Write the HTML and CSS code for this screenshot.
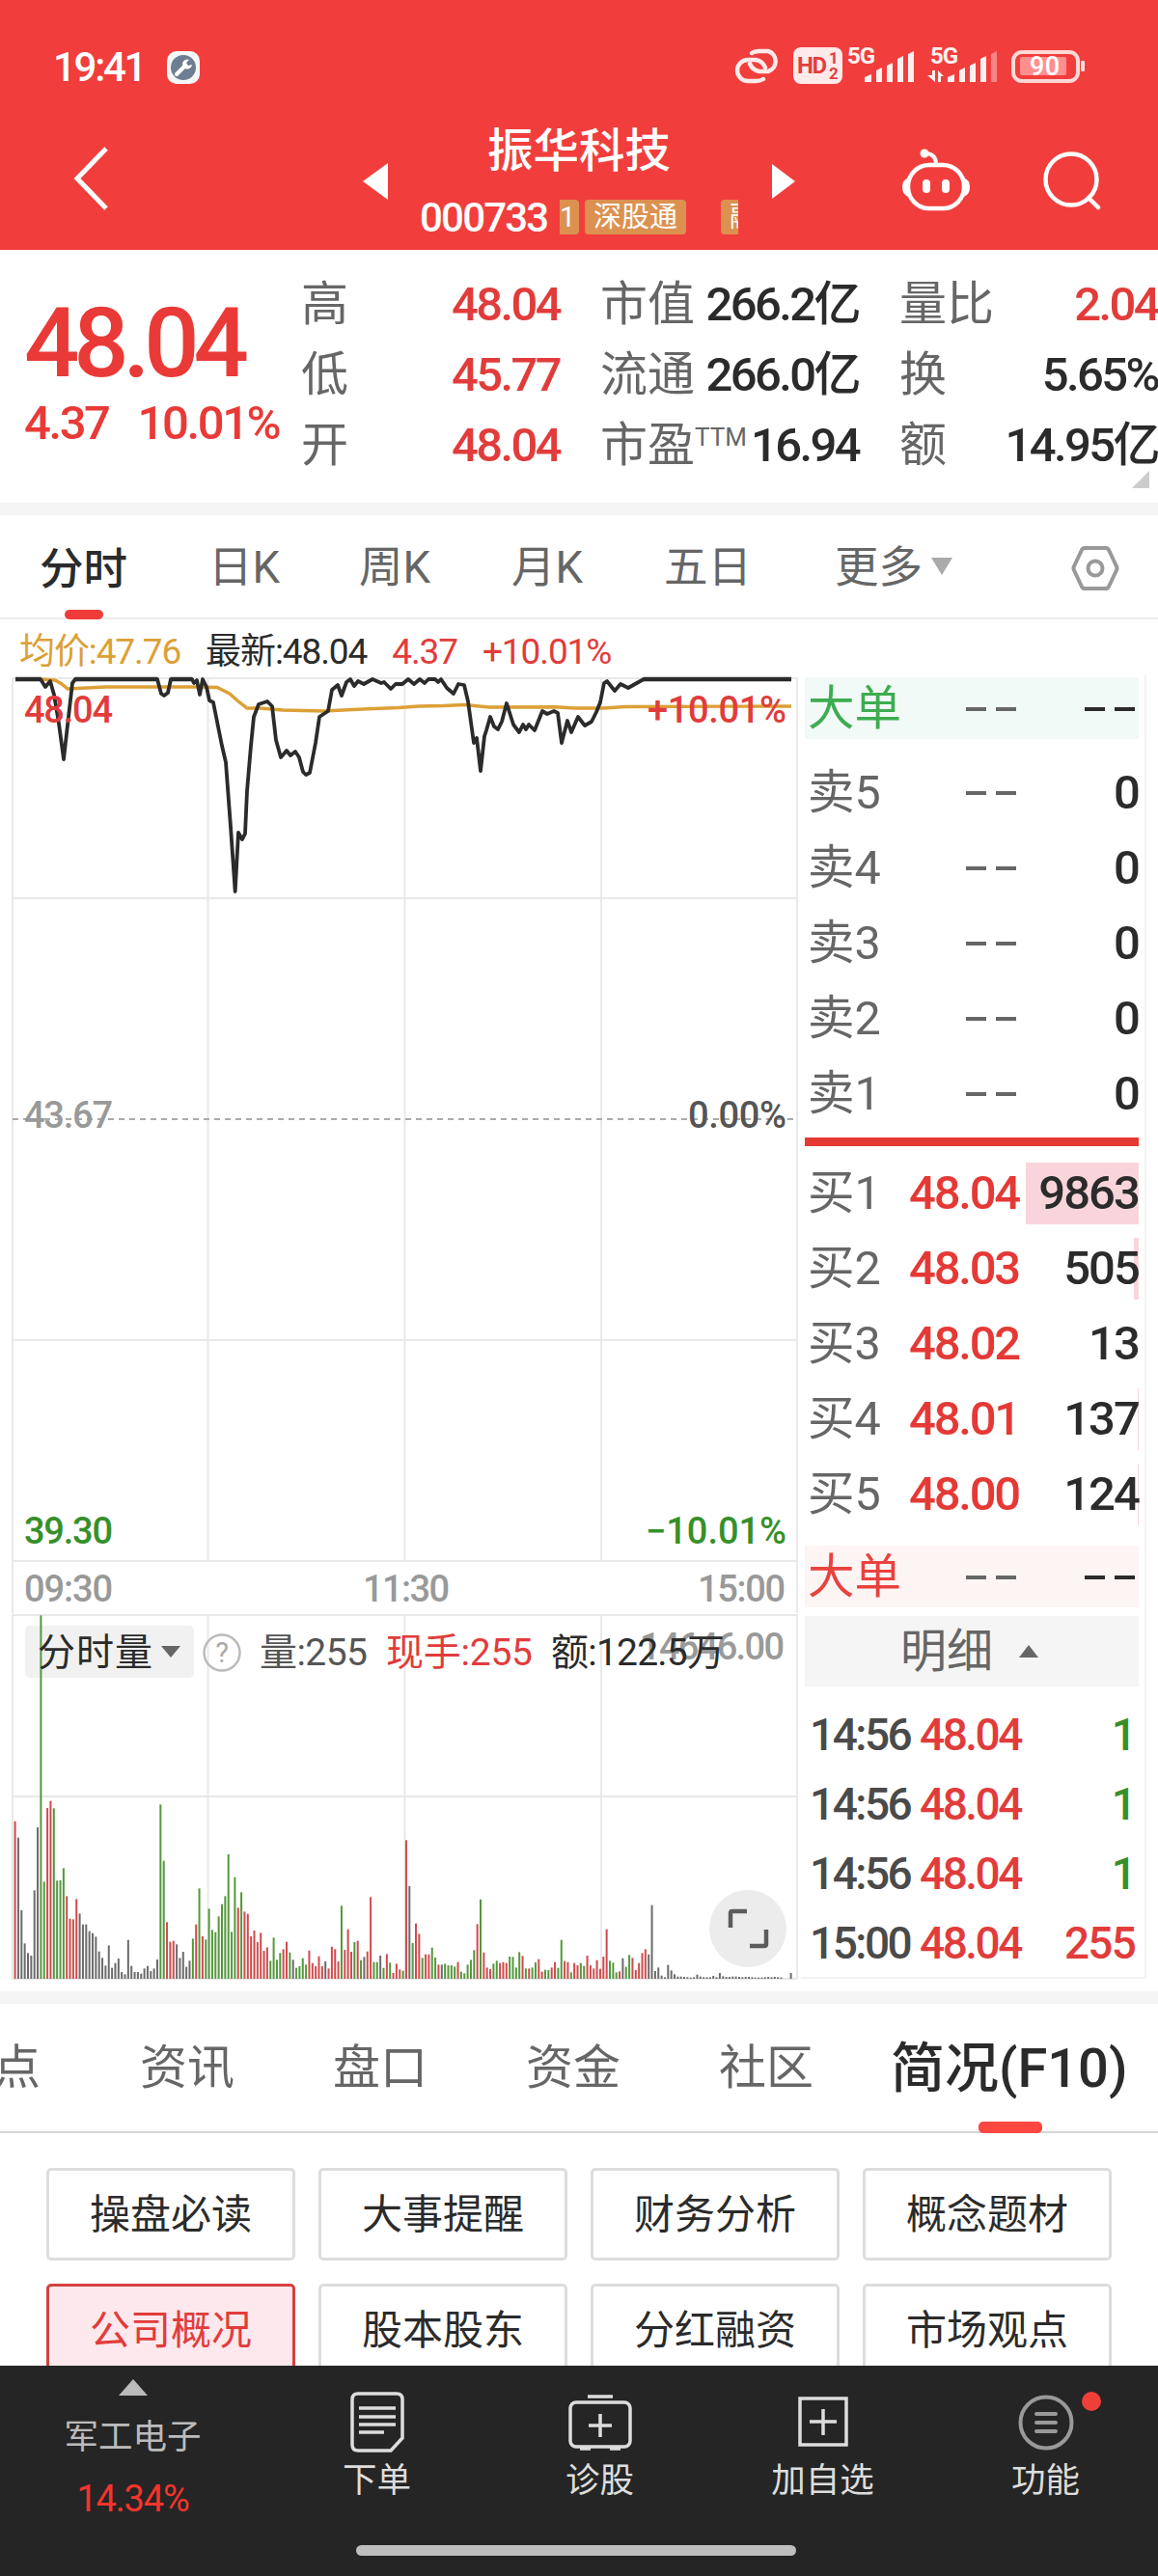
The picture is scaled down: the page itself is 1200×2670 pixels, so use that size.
FILE: index.html
```
<!doctype html>
<html lang="zh-CN">
<head>
    <meta charset="UTF-8">
    <meta name="viewport" content="width=device-width, initial-scale=1.0">
    <title>振华科技 000733</title>
    <link rel="stylesheet" href="styles.css">
</head>
<body>
<div class="screen">
    <div class="header">
        <div class="status-bar">
            <span class="clock">19:41</span>
            <svg class="app-icon" width="36" height="36" viewBox="0 0 36 36">
                <rect x="1" y="1" width="34" height="34" rx="10" fill="#f4f6f8"/>
                <circle cx="18" cy="18" r="13" fill="#6d7d92"/>
                <path d="M11 25l8-8" stroke="#fff" stroke-width="4" stroke-linecap="round"/>
                <path d="M24 10a5 5 0 1 0 3 5l-4 1-2-3z" fill="#fff"/>
            </svg>
            <svg class="status-icons" width="400" height="50" viewBox="740 45 400 50">
                <g fill="none" stroke="#ffeaea" stroke-width="4.5" stroke-linecap="round">
                    <path d="M779 55q3-2 8-2h9a11 11 0 0 1 0 21h-9q-7-1-10-8"/>
                    <path d="M791 82q-3 2-8 2h-8a11 11 0 0 1 0-22h8q7 1 10 8"/>
                </g>
                <rect x="822" y="49" width="51" height="38" rx="8" fill="#ffeaea"/>
                <text x="826" y="76" class="hd" textLength="31">HD</text>
                <text x="859" y="66" class="hd-small">1</text>
                <text x="859" y="82" class="hd-small">2</text>
                <g fill="#fff0f0">
                    <text x="878" y="66" class="net" textLength="29">5G</text>
                    <path d="M896 85v-5l7-3v8zM908 85v-12l6-3v15zM919 85v-17l6-3v20zM930 85v-24l6-3v27zM941 85v-29l6-3v32z"/>
                    <text x="964" y="66" class="net" textLength="29">5G</text>
                    <path d="M966 73h3v12l-8-7h5zM972 85v-12l6 6h-3v6z"/>
                    <path d="M982 85v-5l7-3v8zM994 85v-12l6-3v15zM1005 85v-17l6-3v20zM1016 85v-24l6-3v27z"/>
                    <path d="M1027 85v-29l6-3v32z" opacity=".4"/>
                </g>
                <rect x="1050" y="54" width="67" height="30" rx="9" fill="none" stroke="#ffd9d6" stroke-width="4"/>
                <rect x="1057" y="59" width="48" height="19" rx="2" fill="#ff8f8f"/>
                <rect x="1120" y="63" width="4" height="11" rx="1" fill="#ffe0e0"/>
                <text x="1067" y="78" class="battery" textLength="31">90</text>
            </svg>
        </div>
        <div class="title-bar">
            <svg class="back" width="40" height="68" viewBox="0 0 40 68">
                <path d="M35 3L5 34L35 65" fill="none" stroke="#fff" stroke-width="5"/>
            </svg>
            <svg class="prev" width="26" height="38" viewBox="0 0 26 38"><path d="M26 0v38L0 19z" fill="#fff"/></svg>
            <div class="stock">
                <div class="stock-name">振华科技</div>
                <div class="stock-code">
                    <span class="code">000733</span>
                    <div class="tags">
                        <span class="tag tag-first">1</span>
                        <span class="tag">深股通</span>
                        <span class="tag tag-last">融</span>
                    </div>
                </div>
            </div>
            <svg class="next" width="24" height="36" viewBox="0 0 24 36"><path d="M0 0v36L24 18z" fill="#fff"/></svg>
            <svg class="robot" width="72" height="66" viewBox="934 153 72 66">
                <rect x="941" y="171" width="58" height="45" rx="22" fill="none" stroke="#fff" stroke-width="4.5"/>
                <path d="M942 184q-7 2-7 10t7 10zM998 184q7 2 7 10t-7 10z" fill="#fff"/>
                <path d="M960 159q10 1 10 11" fill="none" stroke="#fff" stroke-width="4"/>
                <circle cx="958" cy="159" r="4.5" fill="#fff"/>
                <rect x="956" y="186" width="8" height="14" rx="4" fill="#fff"/>
                <rect x="976" y="186" width="8" height="14" rx="4" fill="#fff"/>
            </svg>
            <svg class="search" width="64" height="62" viewBox="1079 156 64 62">
                <circle cx="1110" cy="186" r="26.5" fill="none" stroke="#fff" stroke-width="4.5"/>
                <path d="M1128 205l10 10" stroke="#fff" stroke-width="4.5" stroke-linecap="round"/>
            </svg>
        </div>
    </div>

    <div class="quote">
        <div class="price">
            <div class="price-now">48.04</div>
            <div class="price-change"><span>4.37</span><span>10.01%</span></div>
        </div>
        <div class="stats">
            <div class="stat"><span>高</span><b class="red">48.04</b></div>
            <div class="stat"><span>市值</span><b>266.2亿</b></div>
            <div class="stat"><span>量比</span><b class="red">2.04</b></div>
            <div class="stat"><span>低</span><b class="red">45.77</b></div>
            <div class="stat"><span>流通</span><b>266.0亿</b></div>
            <div class="stat"><span>换</span><b>5.65%</b></div>
            <div class="stat"><span>开</span><b class="red">48.04</b></div>
            <div class="stat"><span>市盈<sup>TTM</sup></span><b>16.94</b></div>
            <div class="stat"><span>额</span><b>14.95亿</b></div>
        </div>
        <i class="expand"></i>
    </div>

    <div class="periods">
        <span class="period active">分时</span>
        <span class="period">日K</span>
        <span class="period">周K</span>
        <span class="period">月K</span>
        <span class="period">五日</span>
        <span class="period">更多<i class="caret"></i></span>
        <svg class="setting" width="50" height="48" viewBox="0 0 50 48">
            <path d="M14 3h22q2 0 3 2l8 17q1 2 0 4l-8 17q-1 2-3 2H14q-2 0-3-2L3 26q-1-2 0-4l8-17q1-2 3-2z" fill="none" stroke="#999" stroke-width="4"/>
            <circle cx="25" cy="24" r="7.5" fill="none" stroke="#999" stroke-width="4"/>
        </svg>
    </div>

    <div class="averages">
        <span class="gold">均价:47.76</span>
        <span>最新:48.04</span>
        <span class="red">4.37</span>
        <span class="red">+10.01%</span>
    </div>

    <div class="market">
        <div class="charts">
            <svg class="price-chart" width="830" height="972" viewBox="0 0 830 972">
                <g class="grid">
                    <path d="M13 3H826V918H13zM13 231H826M13 689H826M215.5 3V918M419.5 3V918M623 3V918M13 918V972M826 918V972"/>
                    <path class="dashed" d="M13 460H826"/>
                </g>
                <polyline class="avg-line" points="42,4 57,5 64,9 70,14 110,12 209,12 225,12.5 238,19 247,27 256,34 269,34 293,36 335,37 376,35 413,33.5 434,32 460,31.5 481,30.5 507,33 575,32.7 596,34 625,34 648,32.5 820,32"/>
                <polyline class="price-line" points="16,4 42,4 47,12 52,6 56,20 61,50 66,87 71,43 75,8 78,4 163,4 167,19 170,21 174,18 177,4 199,4 201,8 204,5 207,20 210,4 214,12 217,26 221,28 230,73 234,90 239,157 243.7,224 247,163 251,170 254,164 256,120 260,73 263,43 268,30 277,27 282,32 286,67 291,85 297,78 301,83 306,79 310,85 314,100 317,103 321,101 327,70 331,43 340,37 344,15 350,10 354,21 359,7 363,4 367,11 371,6 377,9 386,4 395,8 398,7 405,14 410,9 417,9 423,4 429,9 435,4 440,8 444,4 451,4 454,7 457,4 463,13 470,19 475,9 481,10 485,27 491,70 494,65 498,99 502,63 504,57 508,43 512,53 516,56 520,48 525,29 532,51 538,59 542,51 545,56 548,51 554,57 558,47 562,37 567,40 574,37 578,39 582,70 588,47 592,59 599,43 606,52 613,48 618,38 622,28 626,8 629,6 637,16 643,9 651,13 667,4 820,4"/>
                <path class="limit-line" d="M16 4H42M78 4H163M177 4H199M667 4H820"/>
                <g class="labels">
                    <text class="red" x="25" y="49" textLength="92">48.04</text>
                    <text class="red" x="671" y="49" textLength="144">+10.01%</text>
                    <text class="gray" x="25" y="469" textLength="92">43.67</text>
                    <text class="dark" x="713" y="469" textLength="102">0.00%</text>
                    <text class="green" x="25" y="900" textLength="92">39.30</text>
                    <text class="green" x="669" y="900" textLength="146">−10.01%</text>
                    <text class="gray" x="25" y="960" textLength="92">09:30</text>
                    <text class="gray" x="376" y="960" textLength="90">11:30</text>
                    <text class="gray" x="723" y="960" textLength="91">15:00</text>
                </g>
            </svg>
            <div class="volume">
                <svg class="volume-chart" width="830" height="380" viewBox="0 0 830 380">
                    <path class="grid" d="M13 2H826V379H13zM13 190H826M215.5 2V379M419.5 2V379M623 2V379"/>
                    <rect x="26" y="13" width="175" height="54" rx="5" fill="#f1f1f1"/>
                    <g class="bars"></g>
                    <path d="M167 34h20l-10 12z" fill="#666"/>
                    <circle cx="230" cy="41" r="18.5" fill="none" stroke="#bbb" stroke-width="2.5"/>
                    <text class="help" x="230" y="51">?</text>
                    <g class="labels">
                        <text class="gray" x="663" y="48" textLength="150">14646.00</text>
                        <text class="black cjk" x="39" y="54" textLength="119">分时量</text>
                        <text class="dark cjk" x="269" y="54" textLength="112">量:255</text>
                        <text class="red cjk" x="400" y="54" textLength="152">现手:255</text>
                        <text class="black cjk" x="571" y="54" textLength="180">额:122.5万</text>
                    </g>
                </svg>
                <div class="fullscreen">
                    <svg width="44" height="44" viewBox="0 0 44 44">
                        <path d="M4 21V6q0-2 2-2h15M41 23V38q0 2-2 2H24" fill="none" stroke="#5c5c5c" stroke-width="4.5"/>
                    </svg>
                </div>
            </div>
        </div>

        <div class="book">
            <div class="big sell"><span>大单</span><i class="dash"></i><i class="dash black"></i></div>
            <div class="orders">
                <div class="order"><span>卖5</span><i class="dash"></i><b>0</b></div>
                <div class="order"><span>卖4</span><i class="dash"></i><b>0</b></div>
                <div class="order"><span>卖3</span><i class="dash"></i><b>0</b></div>
                <div class="order"><span>卖2</span><i class="dash"></i><b>0</b></div>
                <div class="order"><span>卖1</span><i class="dash"></i><b>0</b></div>
            </div>
            <div class="divider"></div>
            <div class="orders buy">
                <div class="order"><span>买1</span><em>48.04</em><b style="background-size: 117px 64px">9863</b></div>
                <div class="order"><span>买2</span><em>48.03</em><b style="background-size: 5px 64px">505</b></div>
                <div class="order"><span>买3</span><em>48.02</em><b>13</b></div>
                <div class="order"><span>买4</span><em>48.01</em><b style="background-size: 1px 64px">137</b></div>
                <div class="order"><span>买5</span><em>48.00</em><b style="background-size: 1px 64px">124</b></div>
            </div>
            <div class="big bought"><span>大单</span><i class="dash"></i><i class="dash black"></i></div>
            <div class="detail-head">明细<i class="caret-up"></i></div>
            <div class="ticks">
                <div class="tick"><span>14:56</span><em>48.04</em><b class="green">1</b></div>
                <div class="tick"><span>14:56</span><em>48.04</em><b class="green">1</b></div>
                <div class="tick"><span>14:56</span><em>48.04</em><b class="green">1</b></div>
                <div class="tick"><span>15:00</span><em>48.04</em><b class="red">255</b></div>
            </div>
        </div>
    </div>

    <div class="sections">
        <span>点</span>
        <span>资讯</span>
        <span>盘口</span>
        <span>资金</span>
        <span>社区</span>
        <span class="active">简况(F10)</span>
    </div>

    <div class="topics">
        <div class="topic">操盘必读</div>
        <div class="topic">大事提醒</div>
        <div class="topic">财务分析</div>
        <div class="topic">概念题材</div>
        <div class="topic active">公司概况</div>
        <div class="topic">股本股东</div>
        <div class="topic">分红融资</div>
        <div class="topic">市场观点</div>
    </div>

    <div class="bottom">
        <div class="nav">
            <div class="sector">
                <i class="sector-arrow"></i>
                <span>军工电子</span>
                <span class="sector-change">14.34%</span>
            </div>
            <div class="nav-item">
                <svg width="66" height="66" viewBox="0 0 66 66" fill="none" stroke="#ddd" stroke-width="3.5">
                    <path d="M13 3h40q6 0 6 6v40L47 62H13q-6 0-6-6V9q0-6 6-6z"/>
                    <path d="M14 18h38M14 27h38M14 35h38M14 43h26"/>
                </svg>
                <span>下单</span>
            </div>
            <div class="nav-item">
                <svg width="66" height="66" viewBox="0 0 66 66" fill="none" stroke="#ddd" stroke-width="3.5">
                    <rect x="2" y="12" width="62" height="46" rx="6"/>
                    <path d="M20 6h26M33 24v24M21 36h24M12 60h11M43 60h11"/>
                </svg>
                <span>诊股</span>
            </div>
            <div class="nav-item">
                <svg width="66" height="66" viewBox="0 0 66 66" fill="none" stroke="#ddd" stroke-width="3.5">
                    <path d="M9 8h48v48H9zM33 19v27M19 32h28"/>
                </svg>
                <span>加自选</span>
            </div>
            <div class="nav-item">
                <svg width="66" height="66" viewBox="0 0 66 66" fill="none" stroke="#999" stroke-width="4">
                    <circle cx="33" cy="33" r="26.5"/>
                    <path d="M23 24h20M23 33h20M23 42h20" stroke-linecap="round"/>
                </svg>
                <span>功能</span>
                <i class="badge"></i>
            </div>
        </div>
        <div class="home-bar"></div>
    </div>
</div>

<script>
    // one bar per minute: letter is the colour, number is the height
    let volume = "r490 k439 k213 k110 k80 k72 k275 k471 g1130 g302 r531 r553 g530 g305 g306 g344 r257 r187 r185 r248 " +
        "k203 k169 k169 k148 k142 k131 k85 k65 k41 k104 k34 k49 k63 k21 k14 k121 k40 k21 k21 k16 " +
        "k32 k40 k24 k32 k60 g542 g367 r176 r115 r118 k107 k65 k84 k37 k56 g125 r169 g281 r132 g122 " +
        "g218 g152 g145 g194 g232 g257 g387 g146 g316 r221 g269 r209 r202 r132 r150 r114 r143 r87 r98 g56 " +
        "g128 g59 g80 r92 r115 g82 k59 g34 g39 g64 g44 r88 r49 r39 r70 r39 k54 r32 r100 r92 " +
        "r54 g227 r90 r154 r84 g114 r118 g58 k68 r85 r254 g52 g52 k72 g34 r77 g50 r18 r47 r29 " +
        "g25 r431 k288 g111 r172 r140 g65 r76 r76 g97 g66 r44 k44 g47 g42 g42 g38 r52 g22 g17 " +
        "g44 g59 g89 r170 g247 r82 r35 r30 g47 g56 r49 r52 r49 g69 g68 g35 g83 r71 g32 r32 " +
        "g35 g51 r61 r22 g28 g27 r35 r52 g34 g121 r55 r52 g20 r49 r42 g49 g40 r72 r42 r32 " +
        "r58 r31 r69 r154 g56 g50 g20 r23 k64 g37 g74 r65 r27 r49 r80 r92 k76 k229 k24 k35 " +
        "k10 k5 k43 k26 k14 k7 k7 k6 k5 k4 k5 k13 k7 k5 k5 k5 k9 k5 k18 k8 " +
        "k6 k6 k7 k7 k6 k5 k6 k6 k5 k4 k4 k4 k5 k6 k5 k6 k5 k4 k0 k0 k18";
    let colors = {"r": "#d04b4c", "g": "#55973d", "k": "#6b6b6b"};
    let bars = document.querySelector(".bars");

    volume.split(" ").forEach((item, i) => {
        let h = parseInt(item.slice(1)) / 3;
        let bar = document.createElementNS("http://www.w3.org/2000/svg", "rect");
        bar.setAttribute("x", 14.6 + i * 3.35);
        bar.setAttribute("y", 379 - h);
        bar.setAttribute("width", 2);
        bar.setAttribute("height", h);
        bar.setAttribute("fill", colors[item[0]]);
        bars.appendChild(bar);
    });
</script>
</body>
</html>
```

FILE: styles.css
```
*
{
    box-sizing: border-box;
}
body
{
    margin: 0;
    background-color: #fff;
    font-family: Roboto, "Noto Sans CJK SC", sans-serif;
    color: #2b2b2b;
}
svg
{
    display: block;
    flex: none;
}
b, i, em
{
    font-style: normal;
    font-weight: 500;
}
.screen
{
    width: 1200px;
    height: 2670px;
    overflow: hidden;
    display: flex;
    flex-direction: column;
}
.screen > div
{
    flex: none;
}
.red
{
    color: #e13c3b;
    fill: #e13c3b;
}
.green
{
    color: #36902a;
    fill: #36902a;
}
.gold
{
    color: #dca036;
}
.gray
{
    fill: #999;
}
.dark
{
    fill: #555;
}
.black
{
    fill: #2b2b2b;
}

/* header */
.header
{
    height: 259px;
    background-color: #f13e3c;
    color: #fff;
}
.status-bar
{
    height: 140px;
    padding: 0 60px 0 55px;
    display: flex;
    align-items: center;
}
.clock
{
    width: 117px;
    font-size: 42px;
    font-weight: 500;
    line-height: 48px;
    letter-spacing: -2.3px;
}
.status-icons
{
    margin-left: auto;
}
.hd
{
    font-size: 24px;
    font-weight: 700;
    fill: #e2403e;
}
.hd-small
{
    font-size: 17px;
    font-weight: 700;
    fill: #e2403e;
}
.net
{
    font-size: 24px;
    font-weight: 700;
}
.battery
{
    font-size: 27px;
    font-weight: 500;
    fill: #fff;
}
.title-bar
{
    height: 119px;
    display: flex;
    align-items: flex-start;
}
.back
{
    margin: 11px 0 0 75px;
}
.prev
{
    margin: 29px 0 0 261px;
}
.stock
{
    width: 398px;
    padding-left: 33px;
}
.stock-name
{
    height: 64px;
    padding-right: 35px;
    margin-top: -15px;
    line-height: 64px;
    text-align: center;
    font-size: 47.5px;
    font-weight: 500;
}
.stock-code
{
    display: flex;
    align-items: center;
    height: 72px;
}
.code
{
    width: 145px;
    font-size: 42px;
    font-weight: 500;
    letter-spacing: -1.8px;
}
.tags
{
    display: flex;
    width: 185px;
    height: 36px;
    overflow: hidden;
}
.tag
{
    flex: none;
    width: 105px;
    border-radius: 4px;
    background-color: #dc9150;
    font-size: 29px;
    line-height: 36px;
    text-align: center;
}
.tag-first
{
    width: 20px;
    margin-right: 6px;
    border-radius: 0 4px 4px 0;
    text-align: left;
}
.tag-last
{
    margin-left: 36px;
    padding-left: 9px;
    text-align: left;
}
.next
{
    margin: 30px 0 0 0;
}
.robot
{
    margin: 13px 0 0 110px;
}
.search
{
    margin: 16px 0 0 73px;
}

/* quote */
.quote
{
    position: relative;
    display: flex;
    height: 275px;
    border-bottom: 13px solid #f5f5f5;
}
.price
{
    width: 312px;
    padding: 48px 0 0 25px;
    color: #e93a37;
}
.price-now
{
    height: 96px;
    font-size: 101px;
    font-weight: 500;
    line-height: 98px;
    letter-spacing: -6.2px;
}
.price-change
{
    display: flex;
    gap: 30px;
    margin-top: 11px;
    font-size: 49px;
    font-weight: 500;
    line-height: 50px;
    letter-spacing: -2.4px;
    white-space: nowrap;
}
.stats
{
    display: grid;
    grid-template-columns: 268px 268px 268px;
    grid-auto-rows: 73px;
    column-gap: 42px;
    padding-top: 20px;
}
.stat
{
    display: flex;
    align-items: center;
    justify-content: space-between;
    white-space: nowrap;
    font-size: 49px;
    line-height: 73px;
    color: #666;
}
.stat b
{
    letter-spacing: -2.6px;
    color: #2b2b2b;
}
.stat b.red
{
    color: #e13c3b;
}
.stat sup
{
    display: inline-block;
    font-size: 26px;
    line-height: 26px;
    vertical-align: 16px;
}
.expand
{
    position: absolute;
    right: 9px;
    bottom: 15px;
    border-left: 18px solid transparent;
    border-bottom: 18px solid #ccc;
}

/* period tabs */
.periods
{
    display: grid;
    grid-template-columns: 175px 156px 158px 158px 177px 245px 50px;
    align-items: center;
    height: 108px;
    padding-left: 41px;
    border-bottom: 2px solid #ececec;
    font-size: 45.5px;
    line-height: 109px;
    color: #666;
}
.period.active
{
    position: relative;
    width: 92px;
    height: 106px;
    color: #2b2b2b;
    font-weight: 500;
}
.period.active::after, .sections .active::after
{
    content: "";
    position: absolute;
    left: 26px;
    bottom: 0;
    width: 40px;
    height: 10px;
    border-radius: 5px;
    background-color: #ef3b3a;
}
.caret
{
    display: inline-block;
    margin-left: 9px;
    border: 11px solid transparent;
    border-top: 18px solid #aaa;
    border-bottom: 0;
    vertical-align: 8px;
}
.averages
{
    display: flex;
    gap: 26px;
    height: 58px;
    padding-left: 20px;
    font-size: 37px;
    line-height: 67px;
    letter-spacing: -1.1px;
    white-space: nowrap;
}

/* charts */
.market
{
    display: flex;
    height: 1364px;
}
.charts
{
    width: 830px;
}
.grid
{
    fill: none;
    stroke: #e9e9e9;
    stroke-width: 2;
}
.dashed
{
    stroke: #aaa;
    stroke-dasharray: 6 5;
}
.avg-line
{
    fill: none;
    stroke: #dca036;
    stroke-width: 3.4;
}
.price-line
{
    fill: none;
    stroke: #2b2b2b;
    stroke-width: 3.8;
    stroke-linejoin: round;
}
.limit-line
{
    stroke: #2b2b2b;
    stroke-width: 4.4;
}
.labels
{
    font-size: 38px;
    font-weight: 500;
}
.labels .cjk
{
    font-size: 39px;
    font-weight: 400;
}
.volume
{
    position: relative;
}
.help
{
    font-size: 29px;
    fill: #aaa;
    text-anchor: middle;
}
.fullscreen
{
    position: absolute;
    left: 735px;
    top: 287px;
    width: 80px;
    height: 80px;
    padding: 18px;
    border-radius: 50%;
    background-color: #ececec;
}

/* order book */
.book
{
    width: 358px;
    height: 1351px;
    padding: 2px 6px 0 4px;
    border-right: 2px solid #f2f2f2;
    border-bottom: 2px solid #f2f2f2;
}
.big, .order
{
    display: grid;
    grid-template-columns: 106px 118px 1fr;
    align-items: center;
    justify-items: end;
    padding-left: 3px;
    font-size: 48.5px;
    color: #666;
}
.big span, .order span
{
    justify-self: start;
}
.big
{
    height: 64px;
    line-height: 66px;
}
.sell
{
    margin-bottom: 16px;
    background-color: #f2faf7;
}
.sell span
{
    color: #3eac51;
}
.bought
{
    margin-top: 15px;
    background-color: #fdf4f4;
}
.bought span
{
    color: #e8423f;
}
.dash
{
    width: 52px;
    height: 4px;
    margin-right: 8px;
    background: linear-gradient(90deg, #666 21px, transparent 21px, transparent 31px, #666 31px);
}
.dash.black
{
    margin-right: 4px;
    background: linear-gradient(90deg, #2b2b2b 21px, transparent 21px, transparent 31px, #2b2b2b 31px);
}
.order
{
    height: 78px;
    line-height: 80px;
}
.order em
{
    font-size: 49px;
    letter-spacing: -2.2px;
    margin-right: 5px;
    color: #e53935;
}
.order b
{
    width: 100%;
    text-align: right;
    font-size: 49px;
    letter-spacing: -1.9px;
    color: #2b2b2b;
}
.divider
{
    height: 9px;
    margin: 7px 0 9px;
    background-color: #e43a33;
}
.buy b
{
    background: linear-gradient(#f9d5db, #f9d5db) 100% 50% / 0 0 no-repeat;
}
.detail-head
{
    display: flex;
    align-items: center;
    justify-content: center;
    height: 73px;
    margin-top: 9px;
    padding-right: 5px;
    background-color: #f5f5f5;
    font-size: 48px;
    line-height: 73px;
    color: #666;
}
.caret-up
{
    margin-left: 27px;
    border: 10px solid transparent;
    border-bottom: 13px solid #666;
    border-top: 0;
}
.ticks
{
    padding-top: 15px;
}
.tick
{
    display: grid;
    grid-template-columns: 114px 110px 1fr;
    height: 72px;
    padding: 0 4px 0 5px;
    font-size: 46px;
    line-height: 71px;
    letter-spacing: -2.5px;
    color: #4a4a4a;
}
.tick span
{
    font-weight: 500;
}
.tick em
{
    color: #e13c3b;
}
.tick b
{
    text-align: right;
    letter-spacing: -1.8px;
}

/* info sections */
.sections
{
    display: grid;
    grid-template-columns: 152px 200px 200px 200px 178px 250px;
    height: 147px;
    margin-left: -7px;
    border-top: 13px solid #f5f5f5;
    border-bottom: 2px solid #d5d5d5;
    font-size: 49px;
    line-height: 134px;
    white-space: nowrap;
    color: #666;
}
.sections .active
{
    position: relative;
    font-size: 56px;
    font-weight: 500;
    color: #2b2b2b;
}
.sections .active::after
{
    left: 91px;
    width: 66px;
    height: 12px;
    background-color: #fb4742;
}
.topics
{
    display: grid;
    grid-template-columns: repeat(4, 258px);
    grid-auto-rows: 96px;
    gap: 24px;
    height: 241px;
    padding: 36px 48px 0;
    overflow: hidden;
}
.topic
{
    border: 3px solid #ddd;
    border-radius: 5px;
    text-align: center;
    font-size: 42px;
    line-height: 92px;
}
.topic.active
{
    border-color: #d4413f;
    background-color: #fde8ed;
    color: #e13c3b;
}

/* bottom bar */
.bottom
{
    height: 218px;
    background-color: #252525;
    color: #ddd;
}
.nav
{
    display: grid;
    grid-template-columns: 275px repeat(4, 231px);
    height: 186px;
}
.sector
{
    display: flex;
    flex-direction: column;
    align-items: center;
    font-size: 35.5px;
    line-height: 50px;
    color: #bbb;
}
.sector-arrow
{
    margin: 14px 0 18px;
    border: 15px solid transparent;
    border-top: 0;
    border-bottom: 17px solid #bbb;
}
.sector-change
{
    margin-top: 14px;
    font-size: 38px;
    letter-spacing: -1.2px;
    color: #f5342c;
}
.nav-item
{
    position: relative;
    display: flex;
    flex-direction: column;
    align-items: center;
    padding-top: 26px;
    font-size: 35.5px;
    line-height: 54px;
}
.badge
{
    position: absolute;
    left: 153px;
    top: 27px;
    width: 20px;
    height: 20px;
    border-radius: 50%;
    background-color: #ee4038;
}
.home-bar
{
    width: 456px;
    height: 11px;
    margin-left: 369px;
    border-radius: 6px;
    background-color: #bebebe;
}
```
